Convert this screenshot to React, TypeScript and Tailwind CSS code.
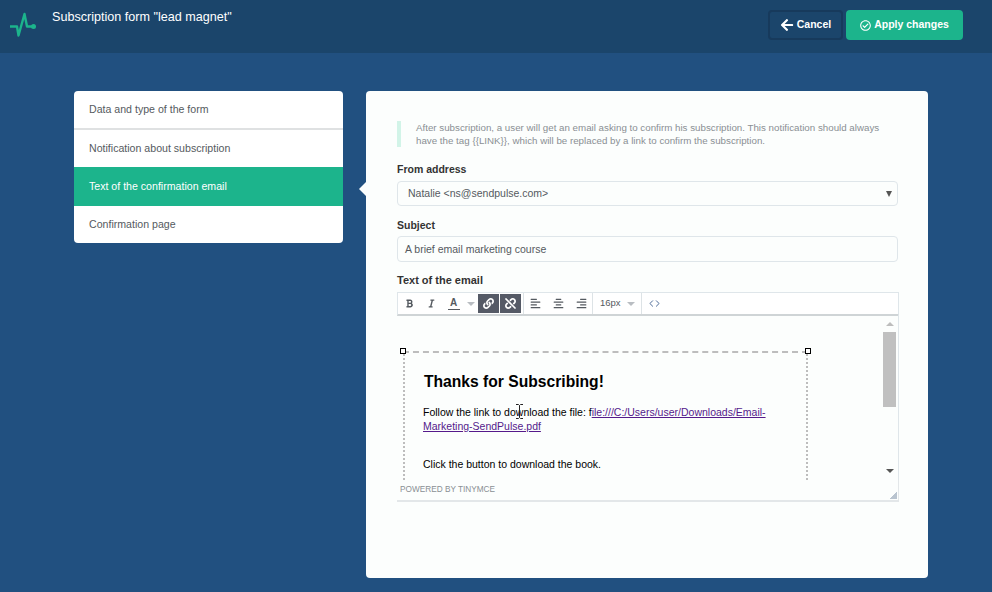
import { Code } from 'lucide-react'
import { FaAlignCenter, FaAlignLeft, FaAlignRight, FaArrowLeft, FaBold, FaItalic, FaLink, FaRegCheckCircle, FaUnlink } from 'react-icons/fa'

const STEPS = [
  { label: 'Data and type of the form', cls: 'h-[39px] border-b-2 border-[#dfe1e2] text-[#555a60]' },
  { label: 'Notification about subscription', cls: 'h-[37px] text-[#555a60]' },
  { label: 'Text of the confirmation email', cls: 'h-[39px] bg-[#1cb48c] text-white' },
  { label: 'Confirmation page', cls: 'h-[37px] text-[#555a60]' },
]

function Caret() {
  return <span className="w-0 h-0 border-x-[4px] border-x-transparent border-t-[4px] border-t-[#b9bdc2]" />
}

function Toolbar() {
  return (
    <div className="h-[21px] flex items-center bg-white border-t border-x border-[#dfe6ea] border-b-2 border-b-[#cfd4d6] text-[#555a60] box-content -mb-px">
      <div className="flex items-center h-full pl-[1px] pr-[2px] border-r border-[#dde3e6] gap-[1px]">
        <span className="w-[21px] h-[19px] flex items-center justify-center"><FaBold size={9} /></span>
        <span className="w-[21px] h-[19px] flex items-center justify-center"><FaItalic size={9} /></span>
        <span className="w-[21px] h-[19px] flex flex-col items-center justify-center text-[10px] leading-[11px] font-bold">
          A
          <span className="w-[12px] h-[1px] bg-[#555a60] mt-[1px]" />
        </span>
        <span className="w-[12px] flex justify-center"><Caret /></span>
        <span className="w-[21px] h-[19px] flex items-center justify-center bg-[#555a66] text-white"><FaLink size={11} /></span>
        <span className="w-[21px] h-[19px] flex items-center justify-center bg-[#555a66] text-white"><FaUnlink size={11} /></span>
      </div>
      <div className="flex items-center h-full border-r border-[#dde3e6] gap-[1px]">
        <span className="w-[22px] flex justify-center"><FaAlignLeft size={11} /></span>
        <span className="w-[22px] flex justify-center"><FaAlignCenter size={11} /></span>
        <span className="w-[22px] flex justify-center"><FaAlignRight size={11} /></span>
      </div>
      <div className="flex items-center h-full w-[49px] pl-[7px] gap-[6px] border-r border-[#dde3e6] text-[9.5px]">
        16px <Caret />
      </div>
      <div className="flex items-center h-full px-[7px]">
        <Code size={11} strokeWidth={2} className="text-[#3f5f8f]" />
      </div>
    </div>
  )
}

function EditorBody() {
  return (
    <div className="relative h-[165px] overflow-hidden border-r border-[#dfe6ea] pt-[36px] pl-[6px]">
      <div className="relative w-[405px] h-[200px] border-2 border-b-0 border-dashed [border-left-style:dotted] [border-right-style:dotted] border-[#bdbdbd] pl-[18px] pt-[19px] text-black">
        <span className="absolute -left-[5px] -top-[5px] w-[6px] h-[6px] border border-black bg-white" />
        <span className="absolute -right-[5px] -top-[5px] w-[6px] h-[6px] border border-black bg-white" />
        <h2 className="ml-[1px] text-[15.65px] leading-[20px] font-bold">Thanks for Subscribing!</h2>
        <p className="mt-[13px] w-[360px] text-[10.5px] leading-[14px]">
          Follow the link to download the file: f
          <a className="text-[#551a8b] underline">ile:///C:/Users/user/Downloads/Email-Marketing-SendPulse.pdf</a>
        </p>
        <p className="mt-[24px] text-[10.5px] leading-[14px]">Click the button to download the book.</p>
        {/* mouse cursor over the link line */}
        <svg width="7" height="15" viewBox="0 0 7 15" className="absolute left-[111px] top-[51px]" fill="none" stroke="#222" strokeWidth="1">
          <path d="M0 .5H2.5L3.5 1.5L4.5 .5H7M3.5 1.5V13.5M0 14.5H2.5L3.5 13.5L4.5 14.5H7" />
        </svg>
      </div>
      <div className="absolute right-[2px] top-0 bottom-0 w-[13px] flex flex-col items-center">
        <span className="mt-[7px] w-0 h-0 border-x-[4px] border-x-transparent border-b-[4px] border-b-[#bdbdbd]" />
        <span className="mt-[6px] w-[13px] h-[75px] bg-[#c0c0c0]" />
        <span className="mt-[62px] w-0 h-0 border-x-[4px] border-x-transparent border-t-[4px] border-t-[#555]" />
      </div>
    </div>
  )
}

export default function App() {
  return (
    <div className="w-[992px] h-[592px] overflow-hidden bg-[#215080] font-['Liberation_Sans',sans-serif]">
      <header className="h-[53px] bg-[#1b456b] flex items-start">
        <svg width="30" height="26" viewBox="0 0 30 26" fill="none" className="ml-[9px] mt-[12px]">
          <path d="M1 14.5H8L9.5 23.5L15.5 2L18 14.5H24" stroke="#1cb48c" strokeWidth="2.4" strokeLinejoin="round" />
          <circle cx="24.5" cy="14.5" r="2.5" fill="#1cb48c" />
        </svg>
        <h1 className="ml-[13px] mt-[9px] text-[12.6px] leading-[16px] text-white">Subscription form "lead magnet"</h1>
        <div className="ml-auto mr-[29px] mt-[10px] flex gap-[3px]">
          <button className="h-[30px] w-[75px] flex items-center justify-center gap-[3px] rounded border-2 border-[#173a5c] text-[10.5px] font-bold text-white">
            <FaArrowLeft size={14} /> Cancel
          </button>
          <button className="h-[30px] w-[117px] flex items-center justify-center gap-[3px] rounded bg-[#1cb48c] text-[10.5px] font-bold text-white">
            <FaRegCheckCircle size={11} /> Apply changes
          </button>
        </div>
      </header>

      <div className="flex items-start pt-[38px] pl-[74px]">
        <nav className="w-[269px] h-[152px] rounded-sm overflow-hidden bg-white text-[10.6px]">
          {STEPS.map(s => (
            <div key={s.label} className={`flex items-center pl-[15px] ${s.cls}`}>{s.label}</div>
          ))}
        </nav>

        <main className="relative ml-[23px] w-[562px] h-[487px] bg-[#fcfefd] rounded-sm pl-[31px] pr-[29px] pt-[30px]">
          <span className="absolute -left-[7px] top-[91px] w-0 h-0 border-y-[7px] border-y-transparent border-r-[7px] border-r-[#fcfefd]" />

          <p className="h-[26px] border-l-[4px] border-[#d2f4e8] pl-[15px] pr-[10px] text-[9.75px] leading-[13px] text-[#8a8f94]">
            After subscription, a user will get an email asking to confirm his subscription. This notification should always have the tag {'{{LINK}}'}, which will be replaced by a link to confirm the subscription.
          </p>

          <label className="block mt-[16px] text-[10.5px] leading-[13px] font-bold text-[#333]">From address</label>
          <div className="mt-[5px] mr-[1px] h-[25px] flex items-center justify-between border border-[#dfe6ea] rounded-sm pl-[10px] pr-[5px] text-[10.5px] text-[#555a60]">
            <span>Natalie &lt;ns@sendpulse.com&gt;</span>
            <span className="w-0 h-0 border-x-[3px] border-x-transparent border-t-[6px] border-t-[#555]" />
          </div>

          <label className="block mt-[13px] text-[10.5px] leading-[13px] font-bold text-[#333]">Subject</label>
          <div className="mt-[4px] mr-[1px] h-[26px] flex items-center border border-[#dfe6ea] rounded-sm pl-[7px] pt-[1px] text-[10.5px] text-[#555a60]">
            A brief email marketing course
          </div>

          <label className="block mt-[12px] text-[11px] leading-[13px] font-bold text-[#333]">Text of the email</label>
          <div className="mt-[5px] w-[502px]">
            <Toolbar />
            <EditorBody />
            <div className="relative h-[22px] flex items-start pt-[4px] pl-[3px] border-r border-b-2 border-[#e3e7e9] text-[8.25px] leading-[12px] text-[#8a8f94]">
              POWERED BY TINYMCE
              <span className="absolute right-[1px] bottom-[1px] w-[8px] h-[7px] bg-[linear-gradient(135deg,transparent_50%,#b9c4cf_50%)]" />
            </div>
          </div>
        </main>
      </div>
    </div>
  )
}
